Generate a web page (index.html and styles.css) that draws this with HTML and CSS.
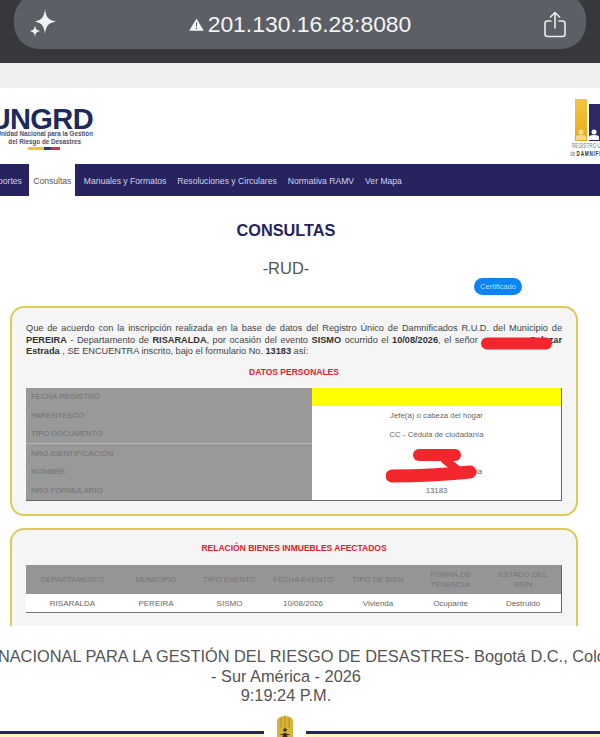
FILE: index.html
```html
<!DOCTYPE html>
<html lang="es">
<head>
  <meta charset="UTF-8">
  <title>Consultas RUD</title>
  <meta name="viewport" content="width=device-width, initial-scale=1">
  <link rel="stylesheet" href="styles.css">
</head>
<body>
  <div class="browser-bar">
    <div class="url-pill">
      <svg class="sparkle" width="36" height="36" viewBox="0 0 36 36">
        <path d="M18 3 C19 11 21 14 29 15.500 C21 17 19 20 18 28 C17 20 15 17 8 15.500 C15 14 17 11 18 3Z" fill="#f0f1f3"/>
        <path d="M8 19 C8.500 23 9.500 24 13 25 C9.500 26 8.500 27 8 31 C7.500 27 6.500 26 3 25 C6.500 24 7.500 23 8 19Z" fill="#f0f1f3"/>
      </svg>
      <div class="url">
        <svg width="15" height="13" viewBox="0 0 15 13">
          <path d="M7.500 0.500 L14.800 12.800 H0.200Z" fill="#f4f4f5"/>
          <path d="M6.900 4.500 H8.100 L7.900 8.800 H7.100Z M6.800 9.700 H8.200 V11 H6.800Z" fill="#5c5f65"/>
        </svg>
        <span>201.130.16.28:8080</span>
      </div>
      <svg class="share" width="24" height="27" viewBox="0 0 24 27" fill="none" stroke="#eceded" stroke-width="1.600" stroke-linecap="round" stroke-linejoin="round">
        <path d="M8 10 H4.500 Q2 10 2 12.500 V23 Q2 25.500 4.500 25.500 H19.500 Q22 25.500 22 23 V12.500 Q22 10 19.500 10 H16"/>
        <path d="M12 17 V2 M7.500 6 L12 1.500 L16.500 6"/>
      </svg>
    </div>
  </div>
  <div class="browser-gap"></div>

  <header class="site-header">
    <div class="logo-ungrd">
      <div class="logo-name">UNGRD</div>
      <div class="logo-sub">Unidad Nacional para la Gestión<br>del Riesgo de Desastres</div>
      <div class="flag-strip"><i class="flag-y"></i><i class="flag-b"></i><i class="flag-r"></i></div>
    </div>
    <div class="logo-rud">
      <div class="rud-bars">
        <div class="rud-bar rud-bar-y">
          <svg width="10" height="11" viewBox="0 0 10 11"><circle cx="5" cy="3" r="2.500" fill="#f7dc8c"/><path d="M0 11 V8 Q0 6 5 6 Q10 6 10 8 V11Z" fill="#f7dc8c"/></svg>
        </div>
        <div class="rud-bar rud-bar-b">
          <svg width="10" height="11" viewBox="0 0 10 11"><circle cx="5" cy="3" r="2.500" fill="#fff"/><path d="M0 11 V8 Q0 6 5 6 Q10 6 10 8 V11Z" fill="#fff"/></svg>
        </div>
      </div>
      <div class="rud-text">REGISTRO ÚNICO<br><span>de <b>DAMNIFICADOS</b></span></div>
    </div>
  </header>

  <nav class="main-nav">
    <a>Soportes</a>
    <a class="active">Consultas</a>
    <a>Manuales y Formatos</a>
    <a>Resoluciones y Circulares</a>
    <a>Normativa RAMV</a>
    <a>Ver Mapa</a>
  </nav>

  <h1 class="page-title">CONSULTAS</h1>
  <h2 class="page-sub">-RUD-</h2>
  <div class="cert-row"><button class="cert-btn">Certificado</button></div>

  <section class="card card-main">
    <p class="intro">
      Que de acuerdo con la inscripción realizada en la base de datos del Registro Único de Damnificados R.U.D. del Municipio de
      <b>PEREIRA</b> - Departamento de <b>RISARALDA</b>, por ocasión del evento <b>SISMO</b> ocurrido el <b>10/08/2026</b>, el señor
      <span class="name-gap"></span> <b>Salazar Estrada</b> , SE ENCUENTRA inscrito, bajo el formulario No. <b>13183</b> así:
    </p>
    <svg class="scribble scribble-name" width="71" height="13" viewBox="0 0 71 13"><path d="M6 6.500 H65" stroke="#f2262c" stroke-width="12" stroke-linecap="round"/></svg>
    <h3 class="card-title">DATOS PERSONALES</h3>
    <table class="person-table">
      <tr class="row-mark"><th>FECHA REGISTRO</th><td></td></tr>
      <tr><th>PARENTESCO</th><td>Jefe(a) o cabeza del hogar</td></tr>
      <tr><th>TIPO DOCUMENTO</th><td>CC - Cédula de ciudadanía</td></tr>
      <tr class="row-line"><th>NRO.IDENTIFICACIÓN</th><td></td></tr>
      <tr><th>NOMBRE</th><td><span class="name-hidden"></span>la</td></tr>
      <tr><th>NRO.FORMULARIO</th><td>13183</td></tr>
    </table>
    <svg class="scribble scribble-id" width="92" height="36" viewBox="0 0 92 36" fill="none" stroke="#f2262c" stroke-linecap="round" stroke-linejoin="round">
      <path d="M33 6 H69" stroke-width="12"/>
      <path d="M59 11 L72 21" stroke-width="8"/>
      <path d="M6 27 Q45 27 84 23" stroke-width="13"/>
    </svg>
  </section>

  <div class="card-clip">
    <section class="card card-goods">
      <h3 class="card-title">RELACIÓN BIENES INMUEBLES AFECTADOS</h3>
      <table class="goods-table">
        <tr>
          <th>DEPARTAMENTO</th><th>MUNICIPIO</th><th>TIPO EVENTO</th><th>FECHA EVENTO</th><th>TIPO DE BIEN</th><th>FORMA DE TENENCIA</th><th>ESTADO DEL BIEN</th>
        </tr>
        <tr>
          <td>RISARALDA</td><td>PEREIRA</td><td>SISMO</td><td>10/08/2026</td><td>Vivienda</td><td>Ocupante</td><td>Destruido</td>
        </tr>
      </table>
    </section>
  </div>

  <footer class="site-footer">
    <div>UNIDAD NACIONAL PARA LA GESTIÓN DEL RIESGO DE DESASTRES- Bogotá D.C., Colombia</div>
    <div>- Sur América - 2026</div>
    <div>9:19:24 P.M.</div>
  </footer>

  <div class="footer-rule">
    <div class="rule-line rule-left"></div>
    <svg class="hand" width="20" height="24" viewBox="0 0 20 24">
      <path d="M2 7 Q2 3 4 3 Q5 1 7 1.500 Q10 -0.500 13 1.500 Q15 1 16 3 Q18 3 18 7 V24 H2Z" fill="#d9b23a"/>
      <path d="M6 3 V13 M10 2 V13 M14 3 V13" stroke="#a9852a" stroke-width="0.800" fill="none"/>
      <circle cx="10" cy="15" r="1.800" fill="#3a3320"/>
      <path d="M7 24 L8.500 18 H11.500 L13 24Z M5.500 19 H14.500 V20 H5.500Z" fill="#3a3320"/>
    </svg>
    <div class="rule-line"></div>
  </div>
</body>
</html>
```

FILE: styles.css
```css
html, body { margin: 0; padding: 0; height: 737px; overflow: hidden; background: #fff; }
body { width: 600px; font-family: "Liberation Sans", Arial, sans-serif; color: #444; position: relative; }

/* browser chrome */
.browser-bar { height: 63px; background: #37383b; padding: 0 14px; box-sizing: border-box; overflow: hidden; }
.url-pill { height: 49px; margin-top: -6px; position: relative; background: #5c5f65; border-radius: 25px; display: flex; align-items: center; justify-content: center; padding-top: 6px; }
.url { display: flex; align-items: center; gap: 4px; color: #f4f4f5; font-size: 22.900px; }
.sparkle { position: absolute; left: 13px; top: 12px; }
.share { position: absolute; right: 19px; top: 17px; }
.browser-gap { height: 25px; background: #f0f0f0; }

/* header */
.site-header { height: 76px; display: flex; justify-content: space-between; overflow: hidden; }
.logo-ungrd { width: 93px; padding-top: 18px; display: flex; flex-direction: column; align-items: flex-end; }
.logo-name { font-size: 29px; font-weight: bold; color: #1d2a5c; line-height: 26px; letter-spacing: -0.600px; white-space: nowrap; }
.logo-sub { font-size: 6.300px; font-weight: bold; color: #4a5070; line-height: 7.600px; text-align: center; white-space: nowrap; margin-top: -2px; }
.flag-strip { display: flex; height: 3px; margin: 1.500px 33px 0 0; }
.flag-strip i { display: block; }
.flag-y { width: 16px; background: #f2c230; }
.flag-b { width: 7px; background: #2a3b7a; }
.flag-r { width: 9px; background: #d9303a; }
.logo-rud { width: 30px; padding-top: 11px; white-space: nowrap; }
.rud-bars { display: flex; align-items: flex-end; gap: 2px; height: 42px; margin-left: 5px; }
.rud-bar { width: 11.500px; display: flex; align-items: flex-end; justify-content: center; padding-bottom: 1px; box-sizing: border-box; flex-shrink: 0; }
.rud-bar-y { height: 42px; background: linear-gradient(#f3c63c, #e8a91c); }
.rud-bar-b { height: 37px; background: #2e2a63; }
.rud-text { font-size: 7.500px; line-height: 8px; color: #777; margin-top: 1px; margin-left: 2px; transform: scaleX(0.620); transform-origin: left; }
.rud-text span { margin-left: -3px; }
.rud-text b { color: #333; letter-spacing: 1.200px; }

/* nav */
.main-nav { height: 32px; background: #26235f; display: flex; align-items: stretch; margin-left: -18px; width: 618px; font-size: 8.600px; color: #d2d2ea; }
.main-nav a { display: flex; align-items: center; padding: 2px 5.500px 0; white-space: nowrap; }
.main-nav .active { background: #fff; color: #555; padding: 2px 3.800px 0; margin: 0 3px 0 2px; }

/* titles */
.page-title { width: 572px; margin: 25px 0 0; text-align: center; font-size: 16.300px; line-height: 18px; color: #26235f; }
.page-sub { width: 572px; margin: 20px 0 0; text-align: center; font-size: 16.500px; line-height: 18px; font-weight: normal; color: #555; }
.cert-row { display: flex; justify-content: flex-end; padding-right: 78px; margin-top: 1px; }
.cert-btn { width: 48px; height: 17px; padding: 0; border: none; border-radius: 9px; background: #0d84f2; color: #b9dcfb; font-family: inherit; font-size: 7.500px; }

/* cards */
.card { width: 568px; margin-left: 10px; box-sizing: border-box; border: 2px solid #dccb5a; border-radius: 14px; background: #f5f5f6; padding: 0 14px; position: relative; }
.card-main { height: 210px; margin-top: 11px; padding-top: 15px; }
.card-clip { height: 98px; margin-top: 12px; overflow: hidden; }
.card-goods { height: 112px; padding-top: 4px; }
.intro { margin: 0; font-size: 9.200px; line-height: 11.500px; text-align: justify; color: #444; }
.intro b { color: #333; }
.name-gap { display: inline-block; width: 45px; }
.card-title { margin: 9px 0 0; text-align: center; font-size: 8.500px; line-height: 11px; color: #e0202f; }
.scribble { position: absolute; }
.scribble-name { left: 469px; top: 29px; }
.scribble-id { left: 374px; top: 141px; }

/* tables */
table { border-collapse: collapse; width: 100%; table-layout: fixed; font-size: 7.800px; }
.person-table { margin-top: 10px; border-right: 1px solid #666; border-bottom: 1px solid #666; background: #fff; }
.person-table th { width: 281px; height: 18.500px; padding: 0 0 0 5px; background: #999; color: #727272; font-weight: normal; text-align: left; }
.person-table td { padding: 0; text-align: center; color: #666; }
.row-mark td { background: #ff0; }
.row-line th { border-top: 1px solid #b5b5b5; }
.name-hidden { display: inline-block; width: 85px; }
.goods-table { margin-top: 11px; border-right: 1px solid #666; border-bottom: 1px solid #777; background: #fff; }
.goods-table th { height: 29px; padding: 0 3px; background: #959595; color: #767676; font-weight: normal; text-align: center; line-height: 10px; }
.goods-table th:nth-child(1) { width: 87px; }
.goods-table th:nth-child(2) { width: 68px; }
.goods-table th:nth-child(3) { width: 67px; }
.goods-table th:nth-child(4) { width: 68px; }
.goods-table th:nth-child(5) { width: 70px; }
.goods-table th:nth-child(6) { width: 63px; }
.goods-table th:nth-child(7) { padding: 0 12px; }
.goods-table td { height: 18px; padding: 0; text-align: center; color: #666; font-size: 8px; }

/* footer */
.site-footer { width: 572px; margin-top: 21px; display: flex; flex-direction: column; align-items: center; font-size: 16.350px; line-height: 19.500px; color: #555; white-space: nowrap; }
.footer-rule { display: flex; align-items: flex-start; gap: 12px; margin-top: 9px; }
.rule-line { flex: 1; height: 7px; margin-top: 16px; border-top: 3px solid #26235f; box-sizing: border-box; background: #fdf3c4; }
.rule-left { flex: none; width: 264px; }
.hand { flex-shrink: 0; margin: 0 -1px; }
```
